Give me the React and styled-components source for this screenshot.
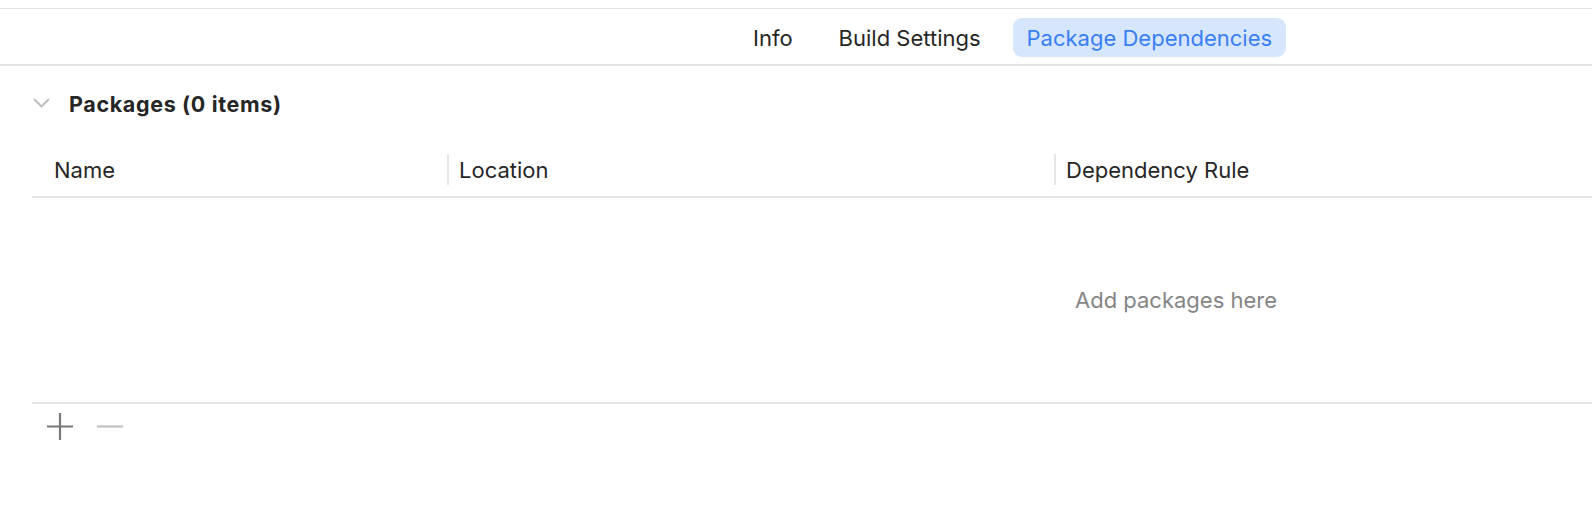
import styled, { createGlobalStyle } from 'styled-components';

const GlobalStyle = createGlobalStyle`
  html, body {
    margin: 0;
    padding: 0;
    background: #ffffff;
  }
  body {
    font-family: Inter, "Noto Sans", "Liberation Sans", sans-serif;
    color: #262626;
    -webkit-font-smoothing: antialiased;
  }
`;

const Page = styled.div`
  width: 1592px;
  height: 526px;
  overflow: hidden;
  background: #ffffff;
  padding-top: 8px;
  box-sizing: border-box;
`;

const TabBar = styled.div`
  display: flex;
  align-items: center;
  gap: 18px;
  height: 58px;
  padding-left: 739px;
  padding-top: 2px;
  border-top: 1px solid #e3e3e3;
  border-bottom: 2px solid #e5e5e5;
  box-sizing: border-box;
`;

const Tab = styled.div`
  display: flex;
  align-items: center;
  height: 39px;
  padding: 0 14px;
  border-radius: 9px;
  font-size: 22px;
  color: ${(p) => (p.$active ? '#3a7ff5' : '#262626')};
  background: ${(p) => (p.$active ? '#d6e6fc' : 'transparent')};
`;

const Content = styled.div`
  padding-left: 32px;
`;

const SectionHeader = styled.div`
  display: flex;
  align-items: center;
  height: 74px;
  box-sizing: border-box;
`;

const Chevron = styled.svg`
  width: 17px;
  height: 10px;
  margin-left: 1px;
  margin-right: 19px;
`;

const SectionTitle = styled.div`
  font-size: 21.5px;
  font-weight: 700;
  letter-spacing: 0.65px;
  padding-top: 2px;
`;

const Table = styled.div`
  display: flex;
  flex-direction: column;
`;

const HeaderRow = styled.div`
  display: flex;
  align-items: center;
  height: 58px;
  padding-top: 3px;
  border-bottom: 2px solid #e5e5e5;
  box-sizing: border-box;
`;

const HeaderCell = styled.div`
  display: flex;
  align-items: center;
  width: ${(p) => p.$width || 'auto'};
  flex: ${(p) => (p.$width ? 'none' : '1')};
  height: 31px;
  padding-left: ${(p) => (p.$first ? '22px' : '10px')};
  border-left: ${(p) => (p.$first ? 'none' : '2px solid #e6e6e6')};
  font-size: 22px;
  box-sizing: border-box;
`;

const EmptyArea = styled.div`
  display: flex;
  align-items: center;
  height: 206px;
  padding-left: 1043px;
  border-bottom: 2px solid #e5e5e5;
  box-sizing: border-box;
`;

const EmptyText = styled.div`
  font-size: 22px;
  color: #858585;
`;

const Footer = styled.div`
  display: flex;
  align-items: center;
  gap: 24px;
  height: 45px;
  padding-left: 15px;
`;

const IconButton = styled.svg`
  width: 26px;
  height: 27px;
`;

export default function App() {
  return (
    <Page>
      <GlobalStyle />
      <TabBar>
        <Tab>Info</Tab>
        <Tab>Build Settings</Tab>
        <Tab $active>Package Dependencies</Tab>
      </TabBar>
      <Content>
        <SectionHeader>
          <Chevron viewBox="0 0 17 10">
            <path d="M1.5 1.5 L8.5 8.5 L15.5 1.5" fill="none" stroke="#bdbdbd" strokeWidth="1.8" strokeLinecap="round" strokeLinejoin="round" />
          </Chevron>
          <SectionTitle>Packages (0 items)</SectionTitle>
        </SectionHeader>
        <Table>
          <HeaderRow>
            <HeaderCell $first $width="415px">Name</HeaderCell>
            <HeaderCell $width="607px">Location</HeaderCell>
            <HeaderCell>Dependency Rule</HeaderCell>
          </HeaderRow>
          <EmptyArea>
            <EmptyText>Add packages here</EmptyText>
          </EmptyArea>
          <Footer>
            <IconButton viewBox="0 0 26 27">
              <path d="M13 0 V27 M0 13.5 H26" stroke="#787878" strokeWidth="2.2" />
            </IconButton>
            <IconButton viewBox="0 0 26 27">
              <path d="M0 13.5 H26" stroke="#c2c2c2" strokeWidth="2.2" />
            </IconButton>
          </Footer>
        </Table>
      </Content>
    </Page>
  );
}
